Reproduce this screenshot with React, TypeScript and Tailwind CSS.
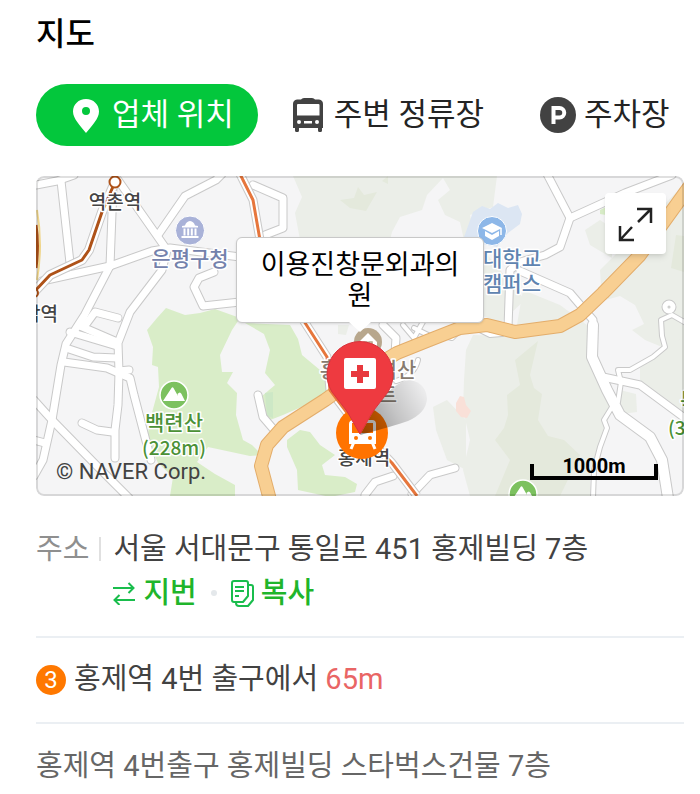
import type { ReactNode } from "react";
import clsx from "clsx";

const FONT = "font-['Roboto','Noto_Sans_CJK_KR',sans-serif]";

const ROADS = [
  "M36 185 57 181 74 175",
  "M61 181 70 263",
  "M113 187 110 266",
  "M118 180 167 250 162 270 130 312 118 343 119 372 118 405 115 430 115 458",
  "M158 235 185 196 216 180 222 174",
  "M42 281 110 266 152 251 170 248 240 257",
  "M110 266 84 316 66 344 61 365 52 420 43 460 34 476",
  "M118 318 95 312 84 327 M80 326 117 342",
  "M240 302 203 306 194 287 199 278 214 272",
  "M70 332 117 346",
  "M66 348 93 357 117 358",
  "M64 362 107 368 130 378 134 395 151 460",
  "M118 371 129 370",
  "M34 400 52 420 97 466 129 498",
  "M82 423 97 430 112 432",
  "M34 440 45 443",
  "M253 185 283 198 283 228 265 235",
  "M258 395 263 417 275 431",
  "M383 325 396 338 395 354",
  "M393 476 375 482 365 495",
  "M455 468 430 475 412 494",
  "M547 174 570 218 592 208 625 193 672 175",
  "M570 218 560 247 545 255 520 262 510 270 508 328",
  "M520 271 570 293 593 320 593 334",
  "M603 377 640 385 686 419",
];

const WIDE_ROADS = ["M593 325 592 357 607 390 620 415 650 437 662 460 668 498"];

const THIN_ROADS = [
  "M686 323 672 315 661 320 662 336 665 347 653 357 630 370 618 370 621 382 618 402 612 407 604 420 607 428 600 447 594 470 593 498",
  "M403 325 414 338 424 320 M414 328 430 336",
  "M440 335 452 338 460 330 M480 330 490 335 502 334",
  "M396 381Q414 376 418 360",
];

const PARKS = [
  "M293 176 497 176 493 207 470 215 475 240 525 300 500 323 300 240 295 213 302 197Z",
  "M523 290 560 305 587 325 588 360 604 390 612 410 600 440 590 470 590 496 470 496 463 470 470 440 463 410 464 380 466 350 473 335 515 336Z",
  "M433 407 447 400 466 420 466 470 447 460 436 430Z",
  "M585 230 600 220 612 228 612 258 590 245Z",
  "M600 270 640 230 684 184 684 340 662 347 645 340 632 330 644 324 635 305 620 296 602 301Z",
  "M640 368 665 345 684 338 684 412 640 380Z",
  "M620 390 636 394 637 412 622 414Z",
  "M338 325 349 325 346 335 338 334Z",
];

const GREENS = [
  "M147 330 157 318 166 308 185 315 200 313 215 309 240 318 232 330 220 355 222 372 233 372 227 383 237 393 236 415 243 440 252 445 262 455 250 456 208 447 197 462 215 474 235 485 235 496 170 496 173 477 158 463 147 440 150 420 159 387 158 367 152 365 153 347Z",
  "M245 323 290 325 298 339 302 355 320 370 330 390 306 405 283 415 265 422 262 396 275 385 265 373 270 350 264 334Z",
  "M287 440 300 430 310 432 320 445 335 455 322 465 325 475 345 477 357 484 355 492 330 497 298 490 297 470 287 447Z",
  "M600 210 606 207 606 215 600 214Z",
];

const LINE_3 = "M240 174 253 200 260 240 M300 315 327 357 330 390 360 430 392 463 417 496";
const LINE_6 = "M115 182 102 212 89 250 82 260 50 275 34 292";
const TRUNK =
  "M692 183 640 255 603 293 580 315 560 326 515 332 487 325 460 328 427 341 397 353 360 375 325 400 283 427 267 445 261 466 270 500";

function Roads({ paths, width, color }: { paths: string[]; width: number; color: string }) {
  return (
    <g stroke={color} strokeWidth={width} fill="none" strokeLinecap="round" strokeLinejoin="round">
      {paths.map((d) => (
        <path key={d} d={d} />
      ))}
    </g>
  );
}

function MapLabel({
  x,
  y,
  color,
  size = 21,
  anchor = "middle",
  children,
}: {
  x: number;
  y: number;
  color: string;
  size?: number;
  anchor?: "start" | "middle" | "end";
  children: ReactNode;
}) {
  return (
    <text
      x={x}
      y={y}
      fontSize={size}
      fill={color}
      textAnchor={anchor}
      stroke="#fff"
      strokeWidth={3}
      strokeLinejoin="round"
      paintOrder="stroke"
      className="font-['Noto_Sans_CJK_KR',sans-serif] font-medium"
    >
      {children}
    </text>
  );
}

function MountainMark({ x, y }: { x: number; y: number }) {
  return (
    <g transform={`translate(${x} ${y})`}>
      <circle r="14" fill="#7cc15f" stroke="#fff" strokeWidth="1.5" />
      <path
        d="M-11 6-2.500-7Q-1.500-8.500-.500-7L4 1 3.500-1Q6-4 7.500-1L11 6Z"
        fill="#fff"
      />
    </g>
  );
}

function MapCanvas() {
  return (
    <svg
      viewBox="36 176 648 320"
      preserveAspectRatio="xMidYMid slice"
      className="absolute inset-0 size-full"
      role="img"
      aria-label="지도"
    >
      <rect x="36" y="176" width="648" height="320" fill="#f5f5f6" />
      {PARKS.map((d) => (
        <path key={d} d={d} fill="#ebeee8" />
      ))}
      <path
        d="M443 178 450 190 438 200 445 215 460 222 464 240 390 240 392 232 400 217 422 210 427 195Z"
        fill="#f5f5f6"
      />
      <g fill="#e4e9dc">
        <path d="M340 200 354 198 358 187 364 195 377 192 366 211 350 208Z" />
        <path d="M382 181 388 176 388 184Z" />
        <path d="M515 360 538 341 530 375 534 388 542 394 538 420 548 436 564 440 580 455 560 496 495 496 510 460 495 440 504 428 508 415 507 395 520 385Z" />
        <path d="M676 235 684 236 684 272 671 268Z" />
      </g>
      <path d="M460 396 464 397 466 405 471 411 467 418 461 417 456 411 456 403Z" fill="#f9e0d8" />
      <path
        d="M473 212 482 206 490 209 498 203 508 208 518 205 522 214 520 224 508 233 497 247 463 240Z"
        fill="#dce6f3"
      />
      {GREENS.map((d) => (
        <path key={d} d={d} fill="#d9edc8" />
      ))}
      <path d="M265 393 273 392 273 418 267 416Z" fill="#cde8c6" />

      <Roads paths={ROADS} width={9} color="#c9c9c9" />
      <Roads paths={THIN_ROADS} width={6} color="#c9c9c9" />
      <Roads paths={WIDE_ROADS} width={12} color="#c9c9c9" />
      <circle cx="669" cy="307" r="4" fill="none" stroke="#c9c9c9" strokeWidth="7" />
      <Roads paths={ROADS} width={7} color="#fff" />
      <Roads paths={THIN_ROADS} width={4} color="#fff" />
      <Roads paths={WIDE_ROADS} width={10} color="#fff" />
      <circle cx="669" cy="307" r="4" fill="none" stroke="#fff" strokeWidth="5" />

      {/* Subway lines and trunk road */}
      <g fill="none" strokeLinejoin="round">
        <path d={LINE_6} stroke="#c9c9c9" strokeWidth="10" />
        <path d={LINE_6} stroke="#fff" strokeWidth="8" />
        <path d={LINE_6} stroke="#ae5218" strokeWidth="3" />
        <path d="M37 210Q43 245 37 280" stroke="#efd58b" strokeWidth="2" />
        <path d="M36 225Q39 245 36 268" stroke="#ae5218" strokeWidth="3" />
        <path d={LINE_3} stroke="#c9c9c9" strokeWidth="9" />
        <path d={LINE_3} stroke="#fff" strokeWidth="7" />
        <path d={TRUNK} stroke="#e3ad6b" strokeWidth="14" />
        <path d={TRUNK} stroke="#f8cf92" strokeWidth="12" />
        <path d={LINE_3} stroke="#e6763c" strokeWidth="3" />
      </g>

      <circle cx="115" cy="182" r="5.500" fill="#fff" stroke="#ae5218" strokeWidth="2" />
      <circle cx="34" cy="293" r="4" fill="#fff" stroke="#ae5218" strokeWidth="2" />

      <MapLabel x={115} y={209} size={19} color="#444">
        역촌역
      </MapLabel>
      <MapLabel x={58} y={321} size={19} color="#444" anchor="end">
        응암역
      </MapLabel>

      <g transform="translate(190 230.500)">
        <circle r="14.500" fill="#a9b2d8" stroke="#fff" />
        <path
          d="M-8-3V-4.500L-5-5Q-4-9 0-9.500 4-9 5-5L8-4.500V-3ZM-6.500-2h2V5h-2ZM-2.800-2h2V5h-2ZM.8-2h2V5h-2ZM4.500-2h2V5h-2ZM-8.500 5.500h17V7.500h-17Z"
          fill="#fff"
        />
      </g>
      <MapLabel x={190} y={266} color="#7482ac">
        은평구청
      </MapLabel>

      <g transform="translate(492 231)">
        <circle r="14.500" fill="#8db7e8" stroke="#fff" />
        <path d="M-10-3 0-8 10-3 0 2ZM-7 0 0 4 7 0V5L0 9-7 5Z" fill="#fff" />
        <path d="M9-3V4" stroke="#fff" strokeWidth="1.500" />
      </g>
      <MapLabel x={483} y={266} color="#5f84b0" anchor="start">
        대학교
      </MapLabel>
      <MapLabel x={483} y={291} color="#5f84b0" anchor="start">
        캠퍼스
      </MapLabel>

      <MountainMark x={174} y={395} />
      <MapLabel x={174} y={430} color="#4b9136">
        백련산
      </MapLabel>
      <MapLabel x={174} y={455} size={19} color="#4b9136">
        (228m)
      </MapLabel>
      <MountainMark x={523} y={494} />
      <MapLabel x={680} y={408} color="#4b9136" anchor="start">
        북악산
      </MapLabel>
      <MapLabel x={668} y={435} size={19} color="#4b9136" anchor="start">
        (342m)
      </MapLabel>

      <g transform="translate(368 342)">
        <circle r="14" fill="#b8a78d" />
        <path d="M-9 0 0-9 9 0V9H-9Z" fill="#fff" />
        <path d="M-4 3V0H-1V3M1 3V0H4V3" fill="none" stroke="#b8a78d" strokeWidth="1.500" />
      </g>
      <MapLabel x={368} y={377} color="#877b70">
        홍제동벽산
      </MapLabel>
      <MapLabel x={368} y={402} color="#877b70">
        아파트
      </MapLabel>
      <MapLabel x={364} y={465} size={19} color="#444">
        홍제역
      </MapLabel>
    </svg>
  );
}

function PlacePin() {
  return (
    <svg
      viewBox="0 0 112 124"
      className="absolute left-1/2 top-[161px] h-[124px] w-28 -translate-x-[42px]"
      aria-hidden="true"
    >
      <defs>
        <linearGradient
          id="pin-shadow"
          gradientUnits="userSpaceOnUse"
          x1="46"
          y1="92"
          x2="108"
          y2="58"
        >
          <stop offset="0" stopColor="#000" stopOpacity=".4" />
          <stop offset=".5" stopColor="#000" stopOpacity=".2" />
          <stop offset="1" stopColor="#000" stopOpacity=".04" />
        </linearGradient>
      </defs>
      <circle cx="44" cy="96" r="26" fill="#ff7300" />
      {/* train */}
      <path d="M36 83H54Q58 83 58 87V107H31V87Q31 83 36 83Z" fill="#fff" />
      <path d="M34 86H55V96H34Z" fill="#ff7300" />
      <circle cx="38" cy="101" r="2" fill="#ff7300" />
      <circle cx="52" cy="101" r="2" fill="#ff7300" />
      <path d="M36 105 33 112M54 105 57 112" stroke="#fff" strokeWidth="3" />
      <path
        d="M42 98 60 66Q78 44 92 43 108 46 109 62 108 76 90 84 76 89 42 98Z"
        fill="url(#pin-shadow)"
      />
      <path
        d="M42 97 35 85Q32 79 28 73L14 55A33 33 0 1 1 70 55L56 73Q52 79 49 85Z"
        fill="#ee3a40"
        stroke="#d8333c"
      />
      <rect x="26" y="21" width="32" height="31" rx="2" fill="#fff" />
      <path d="M39 28H45V34H51V40H45V46H39V40H33V34H39Z" fill="#e8383e" />
    </svg>
  );
}

function PinIcon() {
  return (
    <svg viewBox="0 0 36 36" className="size-9" aria-hidden="true">
      <path
        fillRule="evenodd"
        d="M18 2C10.500 2 5 7.500 5 14.500 5 21.500 12 28.500 18 36 24 28.500 31 21.500 31 14.500 31 7.500 25.500 2 18 2ZM18 10A4 4 0 1 1 18 18 4 4 0 0 1 18 10Z"
        fill="currentColor"
      />
    </svg>
  );
}

function BusIcon() {
  return (
    <svg viewBox="0 0 36 36" className="size-9" aria-hidden="true">
      <path
        fillRule="evenodd"
        d="M11 2.500Q12 1 14 1H22Q24 1 25 2.500H29Q33 3 33 7V31H32V33.500Q32 35 30.500 35H29.500Q28 35 28 33.500V31H9V33.500Q9 35 7.500 35H6.500Q5 35 5 33.500V31H3V7Q3 3 7 2.500ZM8 7Q7 7 7 8V18.500H29.500V8Q29.500 7 28.500 7ZM9 23A2 2 0 1 0 9 27 2 2 0 0 0 9 23ZM27 23A2 2 0 1 0 27 27 2 2 0 0 0 27 23ZM14 24V26.500H22V24Z"
        fill="#424242"
      />
    </svg>
  );
}

function ParkingIcon() {
  return (
    <svg viewBox="0 0 36 36" className="size-9" aria-hidden="true">
      <circle cx="18" cy="18" r="18" fill="#424242" />
      <path d="M13.500 27V11H19.500A4.500 4.500 0 0 1 19.500 20.500H14" fill="none" stroke="#fff" strokeWidth="4" />
    </svg>
  );
}

function SwapIcon() {
  return (
    <svg viewBox="0 0 22 24" className="h-6 w-[22px]" fill="none" stroke="#19bd4c" strokeWidth="2" aria-hidden="true">
      <path d="M0 7H20.500M15.500 2 20.500 7 15.500 12M22 19H1.500M6.500 14 1.500 19 6.500 24" />
    </svg>
  );
}

function CopyIcon() {
  return (
    <svg viewBox="0 0 24 28" className="h-7 w-6" fill="none" stroke="#19bd4c" strokeWidth="2" strokeLinejoin="round" aria-hidden="true">
      <path d="M3 2H15Q17 2 17 4V17L12 23H3Q1 23 1 21V4Q1 2 3 2Z" />
      <path d="M18 6H20Q22 6 22 8V21L17 27H8Q5 27 5 24M4 8H13M4 12H13M4 17H8" />
    </svg>
  );
}

const TABS = [
  { label: "업체 위치", icon: <PinIcon />, active: true },
  { label: "주변 정류장", icon: <BusIcon />, active: false },
  { label: "주차장", icon: <ParkingIcon />, active: false },
];

export default function App() {
  return (
    <main className={clsx("bg-white pl-9 pr-4 pt-3 text-[29px] text-[#424242]", FONT)}>
      <h2 className="text-[32px] font-medium leading-11 text-black">지도</h2>

      <nav className="-mr-4 mt-7 flex" aria-label="지도 보기">
        {TABS.map((tab) => (
          <button
            key={tab.label}
            type="button"
            aria-pressed={tab.active}
            className={clsx(
              "flex h-[62px] shrink-0 items-center gap-2 whitespace-nowrap rounded-full pl-8 pr-6 text-[31px]",
              tab.active ? "bg-[#03c73c] text-white" : "text-[#242424]"
            )}
          >
            {tab.icon}
            <span>{tab.label}</span>
          </button>
        ))}
      </nav>

      {/* Map */}
      <section className="relative mt-[30px] h-80 overflow-hidden rounded-lg">
        <MapCanvas />
        <PlacePin />
        <div className="absolute left-1/2 top-[61px] w-[248px] -translate-x-1/2">
          <p className="break-all rounded-md border border-[#c8c8c8] bg-white px-[23px] pb-[10px] pt-3 text-center text-[27px] leading-[31px] text-black shadow-sm">
            이용진창문외과의원
          </p>
          <svg viewBox="0 0 22 10" className="absolute left-1/2 top-full -mt-px h-[10px] w-[22px] -translate-x-1/2" aria-hidden="true">
            <path d="M0 0H22L11 10Z" fill="#fff" />
          </svg>
        </div>
        <button
          type="button"
          aria-label="지도 확대"
          className="absolute right-[18px] top-[17px] size-[61px] rounded-sm bg-white shadow-md"
        >
          <svg viewBox="0 0 61 61" className="size-full" fill="none" stroke="#222" strokeWidth="2.5" aria-hidden="true">
            <path d="M32 16H46V30M46 16 33 29M15 33V47H29M15 47 27 34" />
          </svg>
        </button>
        <span className="absolute bottom-2 left-5 text-[22px] leading-8">© NAVER Corp.</span>
        <div className="absolute bottom-4 right-[26px] h-6 w-32 text-center text-xl font-bold leading-5 text-black">
          <span className="absolute inset-x-0 bottom-1">1000m</span>
          <span className="absolute inset-x-0 bottom-0 h-4 border-x-4 border-b-4 border-black" />
        </div>
        <div className="pointer-events-none absolute inset-0 rounded-lg border-2 border-black/12" />
      </section>

      {/* Address */}
      <dl className="mt-[31px] flex border-b-2 border-[#ebeff3] pb-[21px] leading-11">
        <dt className="flex h-11 shrink-0 items-center gap-[10px] text-[#8f8f8f]">
          주소
          <span className="mr-3 h-6 w-[2px] bg-[#e0e0e0]" />
        </dt>
        <dd>
          <p>서울 서대문구 통일로 451 홍제빌딩 7층</p>
          <div className="flex items-center font-medium text-[#1fb52b]">
            <button type="button" className="flex items-center gap-2">
              <SwapIcon />
              지번
            </button>
            <span className="mx-[14px] size-[6px] rounded-full bg-[#e4e8eb]" />
            <button type="button" className="flex items-center gap-[6px]">
              <CopyIcon />
              복사
            </button>
          </div>
        </dd>
      </dl>

      <div className="flex h-[86px] items-center border-b-2 border-[#ebeff3]">
        <span className="mr-2 flex size-[30px] items-center justify-center rounded-full bg-[#ff7800] text-2xl text-white">
          3
        </span>
        <p>
          홍제역 4번 출구에서 <span className="text-[#e96565]">65m</span>
        </p>
      </div>

      <p className="py-5 leading-11 text-[#666]">홍제역 4번출구 홍제빌딩 스타벅스건물 7층</p>
    </main>
  );
}
